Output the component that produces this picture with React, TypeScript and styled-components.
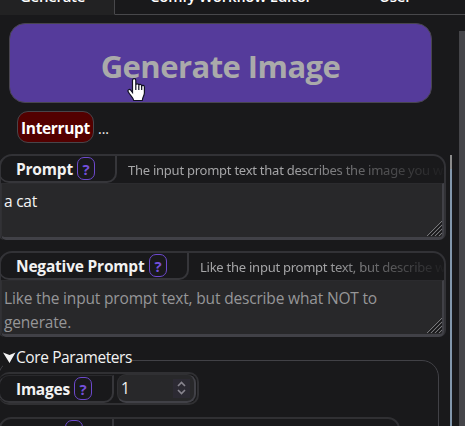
import React from "react";
import styled, { createGlobalStyle } from "styled-components";

const GlobalStyle = createGlobalStyle`
  * { box-sizing: border-box; }
  html, body { margin: 0; height: 100%; overflow: hidden; background: #19191b; }
  body { font-family: "Open Sans", "Noto Sans", sans-serif; font-size: 15.5px; color: #f2f2f2; }
`;

const Page = styled.div`
  display: flex;
  flex-direction: column;
  width: 465px;
  height: 426px;
  overflow: hidden;
  background: #19191b;
`;

const TabBar = styled.nav`
  display: flex;
  flex: none;
  height: 15px;
`;

const Tab = styled.div<{ $width: number; $pad: number; $active?: boolean; $spacing?: number }>`
  display: flex;
  align-items: flex-end;
  flex: none;
  width: ${(p) => p.$width}px;
  padding: 0 0 10px ${(p) => p.$pad}px;
  line-height: 16px;
  font-size: 15px;
  font-weight: 600;
  color: #fff;
  white-space: nowrap;
  letter-spacing: ${(p) => p.$spacing ?? 0}px;
  background: ${(p) => (p.$active ? "#222223" : "#19191b")};
  border-bottom: 1px solid ${(p) => (p.$active ? "#222223" : "#48484b")};
  border-right: ${(p) => (p.$active ? "1px solid #48484b" : "0")};
`;

const Body = styled.div`
  display: flex;
  flex: 1;
  min-height: 0;
`;

const Column = styled.main`
  display: flex;
  flex-direction: column;
  flex: none;
  width: 445px;
`;

const GenerateButton = styled.button`
  flex: none;
  width: 423px;
  height: 80px;
  margin: 8px 0 0 9px;
  padding: 6px 0 0;
  border: 1px solid #48454f;
  border-radius: 16px;
  background: #553b9b;
  color: #aaa;
  font: 700 31px/40px "Open Sans", sans-serif;
  letter-spacing: -0.55px;
  white-space: nowrap;
`;

const StatusRow = styled.div`
  display: flex;
  align-items: center;
  flex: none;
  gap: 4px;
  height: 32px;
  margin: 8px 0 0 17px;
`;

const InterruptButton = styled.button`
  width: 77px;
  height: 32px;
  padding: 2px 0 0;
  border: 1px solid #48454a;
  border-radius: 11px;
  background: #530000;
  color: #fff;
  font: 700 15.5px/20px "Open Sans", sans-serif;
  letter-spacing: -0.35px;
`;

const StatusText = styled.span`
  padding-top: 2px;
  font-size: 14px;
`;

const Field = styled.section<{ $top: number }>`
  flex: none;
  width: 447px;
  height: 86px;
  margin: ${(p) => p.$top}px 0 0 -1px;
  border: solid #323236;
  border-width: 2px 2px 0;
  border-radius: 13px 13px 7px 5px;
`;

const FieldHeader = styled.header`
  display: flex;
  height: 27px;
`;

const Label = styled.div<{ $width: number }>`
  display: flex;
  align-items: center;
  flex: none;
  gap: 5px;
  width: ${(p) => p.$width}px;
  height: 27px;
  margin-left: -2px;
  padding-left: 16px;
  border: solid #36363a;
  border-width: 0 2px 2px 1px;
  border-radius: 10px 0 10px 10px;
  font-size: 15.5px;
  font-weight: 700;
  white-space: nowrap;
`;

const LabelText = styled.span<{ $width: number; $spacing: number }>`
  width: ${(p) => p.$width}px;
  padding-top: 1px;
  letter-spacing: ${(p) => p.$spacing}px;
`;

const Help = styled.span`
  display: flex;
  align-items: center;
  justify-content: center;
  flex: none;
  width: 18px;
  height: 23px;
  border: 1px solid #6d49cd;
  border-radius: 7px;
  color: #7450db;
  font-size: 15px;
  font-weight: 700;
`;

const Hint = styled.span<{ $spacing: number }>`
  flex: 1;
  min-width: 0;
  height: 27px;
  margin-left: 11px;
  overflow: hidden;
  white-space: nowrap;
  font: 13px/28px "Noto Sans", sans-serif;
  letter-spacing: ${(p) => p.$spacing}px;
  color: #a5a5a7;
  mask-image: linear-gradient(90deg, #000 50%, transparent 102%);
`;

const TextBox = styled.div<{ $placeholder?: boolean }>`
  display: flex;
  align-items: flex-end;
  height: 57px;
  padding: 0 0 1px 2px;
  border: solid #414147;
  border-width: 1px 2px 3px 1px;
  border-top-color: #2b2b2e;
  border-left-color: #303033;
  border-radius: 0 0 5px 5px;
  background: #28282a;
  color: ${(p) => (p.$placeholder ? "#969698" : "#f4f4f4")};
`;

const TextValue = styled.div<{ $spacing: number }>`
  align-self: flex-start;
  flex: 1;
  padding-top: 5px;
  line-height: 24px;
  font-size: 15.5px;
  white-space: pre;
  letter-spacing: ${(p) => p.$spacing}px;
`;

const Group = styled.fieldset`
  flex: none;
  width: 441px;
  height: 100px;
  margin: 11px 0 0 -2px;
  padding: 0;
  border: 1px solid #414146;
  border-radius: 17px;
`;

const Legend = styled.legend`
  display: flex;
  align-items: center;
  height: 24px;
  margin-left: 4px;
  padding: 0 0 6px;
  font-size: 15.5px;
  letter-spacing: -0.4px;
  white-space: nowrap;
`;

const ImagesRow = styled.div`
  display: flex;
  width: 200px;
  height: 33px;
  padding-top: 1px;
  border: 2px solid #303033;
  border-left: 0;
  border-radius: 10px;
`;

const ImagesLabel = styled(Label)`
  height: 28px;
  margin: 0;
  padding-left: 16px;
  border-top: 1px solid #29292c;
`;

const NumberInput = styled.div`
  display: flex;
  align-items: center;
  justify-content: space-between;
  width: 79px;
  height: 29px;
  margin: -1px 0 0 3px;
  padding: 0 4px 0 3px;
  border: solid #414147;
  border-width: 1px 2px 2px 1px;
  border-top-color: #303033;
  border-left-color: #303033;
  border-radius: 9px;
  background: #28282a;
`;

const Spinner = styled.span`
  display: flex;
  align-items: center;
  justify-content: center;
  width: 17px;
  height: 19px;
  background: #2c2a33;
`;

const NextRow = styled.div`
  display: flex;
  width: 401px;
  height: 34px;
  margin-top: 12px;
  border: 2px solid #303033;
  border-radius: 12px;
`;

const NextLabel = styled(Label)`
  padding-left: 65px;
`;

const Divider = styled.div`
  flex: none;
  width: 2px;
  margin: 140px 7px 0 5px;
  background: linear-gradient(#8b8b8b 0 14px, #8297ac 14px);
`;

const Scrollbar = styled.div`
  flex: none;
  width: 6px;
  margin-top: 16px;
  background: #454549;
`;

const Cursor = styled.svg`
  position: absolute;
  left: 127px;
  top: 77px;
  pointer-events: none;
`;

const Grip = () => (
  <svg width="15" height="15" viewBox="0 0 15 15" fill="none">
    <path d="M0 15L15 0M4 15L15 4M8 15L15 8M12 15L15 12" stroke="#77777a" strokeWidth="1" />
    <path d="M2 15L15 2M6 15L15 6M10 15L15 10" stroke="#141416" strokeWidth="1" />
  </svg>
);

interface PromptFieldProps {
  label: string;
  labelWidth: number;
  textWidth: number;
  textSpacing: number;
  hint: string;
  hintSpacing: number;
  top: number;
  value: string;
  valueSpacing: number;
  placeholder?: boolean;
}

const PromptField = (p: PromptFieldProps) => (
  <Field $top={p.top}>
    <FieldHeader>
      <Label $width={p.labelWidth}>
        <LabelText $width={p.textWidth} $spacing={p.textSpacing}>{p.label}</LabelText>
        <Help>?</Help>
      </Label>
      <Hint $spacing={p.hintSpacing}>{p.hint}</Hint>
    </FieldHeader>
    <TextBox $placeholder={p.placeholder}>
      <TextValue $spacing={p.valueSpacing}>{p.value}</TextValue>
      <Grip />
    </TextBox>
  </Field>
);

export default function App() {
  return (
    <>
      <GlobalStyle />
      <Page>
        <TabBar>
          <Tab $width={115} $pad={20} $active $spacing={-0.3}>Generate</Tab>
          <Tab $width={227} $pad={35} $spacing={-0.25}>Comfy Workflow Editor</Tab>
          <Tab $width={123} $pad={37} $spacing={-0.3}>User</Tab>
        </TabBar>
        <Body>
          <Column>
            <GenerateButton>Generate Image</GenerateButton>
            <StatusRow>
              <InterruptButton>Interrupt</InterruptButton>
              <StatusText>...</StatusText>
            </StatusRow>
            <PromptField
              top={11} label="Prompt" labelWidth={118} textWidth={56} textSpacing={-0.2}
              hint="The input prompt text that describes the image you want" hintSpacing={-0.25}
              value="a cat" valueSpacing={-0.25}
            />
            <PromptField
              top={11} label="Negative Prompt" labelWidth={190} textWidth={128} textSpacing={-0.2}
              hint="Like the input prompt text, but describe what NOT to generate" hintSpacing={-0.25}
              value={"Like the input prompt text, but describe what NOT to\ngenerate."}
              valueSpacing={-0.17} placeholder
            />
            <Group>
              <Legend>
                <svg width="13" height="14" viewBox="0 0 13 14">
                  <path d="M0 2.5L6.5 5L12.5 2.5L6.5 13Z" fill="#f2f2f2" />
                </svg>
                Core Parameters
              </Legend>
              <ImagesRow>
                <ImagesLabel $width={115}>
                  <LabelText $width={53} $spacing={-0.25}>Images</LabelText>
                  <Help>?</Help>
                </ImagesLabel>
                <NumberInput>
                  1
                  <Spinner>
                    <svg width="9" height="14" viewBox="0 0 9 14" fill="none" stroke="#88858f" strokeWidth="1.6">
                      <path d="M1 5L4.5 1.5L8 5M1 9L4.5 12.5L8 9" />
                    </svg>
                  </Spinner>
                </NumberInput>
              </ImagesRow>
              <NextRow>
                <NextLabel $width={115}><Help>?</Help></NextLabel>
              </NextRow>
            </Group>
          </Column>
          <Divider />
          <Scrollbar />
        </Body>
      </Page>
      <Cursor width="20" height="26" viewBox="0 0 20 26">
        <path
          d="M5.5 3.5C5.5 1 8.8 1 8.8 3.5V8C9 6.2 11.7 6.5 11.8 8.3C12.2 6.9 14.5 7.2 14.7 9C15.2 7.9 17.4 8.3 17.4 10V16C17.4 18.5 15.5 20 15.3 23.5H6.7C6.5 20.5 3.5 19 1.2 14.7C0.2 12.8 2.5 11.7 3.7 13.2L5.5 15.5Z"
          fill="#fff" stroke="#111122" strokeWidth="1.2"
        />
        <path d="M8.8 8V13M11.8 8.3V13M14.7 9V13" stroke="#111122" strokeWidth="1.2" />
      </Cursor>
    </>
  );
}
